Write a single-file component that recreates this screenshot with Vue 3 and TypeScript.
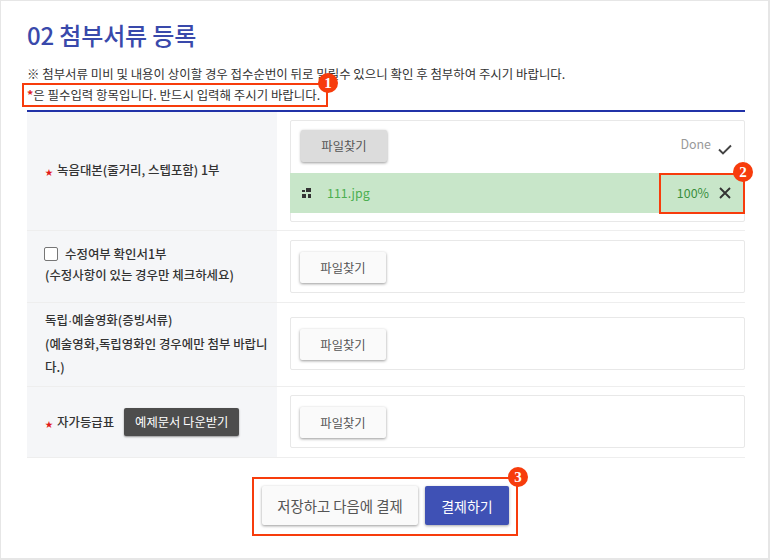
<script setup lang="ts">
const markers = [
  { id: 1, cls: 'mark-one' },
  { id: 2, cls: 'mark-two' },
  { id: 3, cls: 'mark-three' },
];
</script>

<template>
  <div class="page">
    <h2 class="title">02 첨부서류 등록</h2>
    <p class="note">※ 첨부서류 미비 및 내용이 상이할 경우 접수순번이 뒤로 밀릴수 있으니 확인 후 첨부하여 주시기 바랍니다.</p>
    <p class="note"><span class="star">*</span>은 필수입력 항목입니다. 반드시 입력해 주시기 바랍니다.</p>

    <div class="table">
      <div class="row row-a">
        <div class="label">
          <div class="req"><span class="red">★</span>녹음대본(줄거리, 스텝포함) 1부</div>
        </div>
        <div class="cell">
          <div class="box upload">
            <div class="upload-head">
              <button type="button" class="btn pressed">파일찾기</button>
              <div class="done">
                <span>Done</span>
                <svg width="16" height="12" viewBox="0 0 16 12"><path d="M2 6.500 L6 10.500 L14 2.500" fill="none" stroke="#444" stroke-width="1.900" /></svg>
              </div>
            </div>
            <div class="file">
              <svg class="file-icon" width="10" height="10" viewBox="0 0 10 10" fill="#333">
                <rect x="0" y="2" width="3" height="2" /><rect x="4" y="0" width="5" height="4" />
                <rect x="0" y="6" width="4" height="4" /><rect x="6" y="6" width="3" height="4" />
              </svg>
              <span class="file-name">111.jpg</span>
              <span class="percent">100%</span>
              <svg width="12" height="12" viewBox="0 0 12 12"><path d="M1 1 L11 11 M11 1 L1 11" stroke="#333" stroke-width="1.900" /></svg>
            </div>
          </div>
        </div>
      </div>

      <div class="row row-b">
        <div class="label">
          <div class="check-line"><span class="check"></span>수정여부 확인서1부</div>
          <div class="sub">(수정사항이 있는 경우만 체크하세요)</div>
        </div>
        <div class="cell"><div class="box"><button type="button" class="btn">파일찾기</button></div></div>
      </div>

      <div class="row row-c">
        <div class="label tall">
          독립<span class="dot">·</span>예술영화(증빙서류)<br />(예술영화,독립영화인 경우에만 첨부 바랍니다.)
        </div>
        <div class="cell"><div class="box"><button type="button" class="btn">파일찾기</button></div></div>
      </div>

      <div class="row row-d">
        <div class="label inline">
          <div class="req"><span class="red">★</span>자가등급표</div>
          <button type="button" class="dark">예제문서 다운받기</button>
        </div>
        <div class="cell"><div class="box"><button type="button" class="btn">파일찾기</button></div></div>
      </div>
    </div>

    <div class="actions">
      <button type="button" class="save">저장하고 다음에 결제</button>
      <button type="button" class="pay">결제하기</button>
    </div>

    <!-- annotation boxes drawn over the form -->
    <div class="frame frame-one"></div>
    <div class="frame frame-two"></div>
    <div class="frame frame-three"></div>
    <span v-for="m in markers" :key="m.id" class="marker" :class="m.cls">{{ m.id }}</span>
  </div>
</template>

<style scoped>
.page {
  position: relative;
  box-sizing: border-box;
  width: 770px;
  height: 560px;
  padding: 19px 23px 0 26px;
  border: 1px solid #e6e6e6;
  border-width: 1px 2px 2px 1px;
  font-family: "Noto Sans CJK KR", "Noto Sans", sans-serif;
  color: #333;
  background: #fff;
}
.title {
  margin: 0 0 14px;
  height: 30px;
  line-height: 30px;
  font-size: 24px;
  font-weight: 500;
  letter-spacing: -0.15px;
  color: #3949ab;
}
.note {
  margin: 0;
  height: 21px;
  line-height: 21px;
  font-size: 12.450px;
  color: #333;
}
.star {
  color: #e21a1a;
  font-weight: 700;
}
.table {
  margin-top: 4px;
  border-top: 2px solid #2132a8;
}
.row {
  display: grid;
  grid-template-columns: 250px 1fr;
  border-bottom: 1px solid #eeeeee;
}
.row-a { height: 118px; }
.row-b { height: 71px; }
.row-c { height: 83px; }
.row-d { height: 70px; }
.label {
  box-sizing: border-box;
  padding: 0 6px 0 18px;
  background: #f5f6f8;
  font-size: 12.450px;
  font-weight: 500;
  color: #333;
  display: flex;
  flex-direction: column;
  justify-content: flex-start;
}
.row-a .label {
  padding-top: 49px;
}
.row-b .label {
  padding-top: 12px;
}
.tall {
  display: block;
  padding-top: 6px;
  line-height: 23px;
}
.dot {
  font-family: "Liberation Sans", sans-serif;
}
.inline {
  flex-direction: row;
  align-items: center;
  justify-content: flex-start;
  gap: 10px;
}
.red {
  display: inline-block;
  width: 12px;
  font-size: 8px;
  color: #e21a1a;
}
.check-line {
  display: flex;
  align-items: center;
  height: 22px;
}
.check {
  box-sizing: border-box;
  width: 14px;
  height: 14px;
  margin: 0 7px 0 -1px;
  border: 1px solid #767676;
  border-radius: 2px;
  background: #fff;
}
.sub {
  height: 20px;
  line-height: 20px;
}
.cell {
  padding: 8px 0 0 13px;
}
.row-b .cell {
  padding-top: 9px;
}
.row-c .cell {
  padding-top: 14px;
}
.box {
  box-sizing: border-box;
  height: 53px;
  padding: 11px 9px;
  border: 1px solid #e8e8e8;
  border-radius: 2px;
  background: #fff;
}
.upload {
  height: 102px;
  padding: 0;
}
.upload-head {
  display: flex;
  justify-content: space-between;
  height: 52px;
  padding: 9px 11px 0 10px;
  box-sizing: border-box;
}
.btn {
  display: block;
  width: 86px;
  height: 31px;
  padding: 0;
  border: 0;
  border-radius: 2px;
  background: #fafafa;
  box-shadow: 0 1px 3px rgba(0, 0, 0, 0.4);
  font: inherit;
  font-size: 12.300px;
  color: #555;
}
.btn.pressed {
  height: 32px;
  background: #dcdcdc;
}
.done {
  display: flex;
  align-items: flex-start;
  gap: 6px;
  padding-top: 5px;
  font-size: 12.450px;
  color: #999;
}
.done svg {
  margin-top: 8px;
}
.file {
  display: flex;
  align-items: center;
  height: 40px;
  margin: 0 -1px;
  padding: 0 14px 0 12px;
  background: #c8e6c9;
  font-size: 12.450px;
  color: #4caf50;
}
.file-icon {
  margin-right: 15px;
}
.file-name {
  flex: 1;
}
.percent {
  margin-right: 10px;
  font-weight: 400;
  color: #388e3c;
}
.dark {
  width: 115px;
  height: 28px;
  padding: 0;
  border: 0;
  border-radius: 2px;
  background: #4d4d4d;
  box-shadow: 0 1px 2px rgba(0, 0, 0, 0.4);
  font: inherit;
  font-size: 12.300px;
  font-weight: 400;
  color: #fff;
}
.actions {
  display: flex;
  justify-content: flex-start;
  gap: 7px;
  margin: 28px 0 0 235px;
}
.save,
.pay {
  height: 39px;
  padding: 0;
  border: 0;
  border-radius: 2px;
  font: inherit;
  font-size: 14px;
}
.save {
  width: 156px;
  background: #fafafa;
  box-shadow: 0 1px 3px rgba(0, 0, 0, 0.4);
  font-size: 14.400px;
  color: #555;
}
.pay {
  width: 84px;
  background: #3f51b5;
  box-shadow: 0 1px 3px rgba(0, 0, 0, 0.35);
  color: #fff;
}
.frame {
  position: absolute;
  box-sizing: border-box;
  border: 2px solid #f73c0c;
}
.frame-one { left: 21px; top: 82px; width: 306px; height: 24px; }
.frame-two { left: 658px; top: 172px; width: 86px; height: 41px; }
.frame-three { left: 251px; top: 476px; width: 266px; height: 59px; }
.marker {
  position: absolute;
  width: 20px;
  height: 20px;
  border-radius: 50%;
  background: #f73c0c;
  color: #fff;
  font-family: "Liberation Serif", serif;
  font-size: 15px;
  font-weight: 700;
  line-height: 20px;
  text-align: center;
}
.mark-one { left: 317px; top: 72px; }
.mark-two { left: 732px; top: 161px; }
.mark-three { left: 507px; top: 466px; }
</style>
